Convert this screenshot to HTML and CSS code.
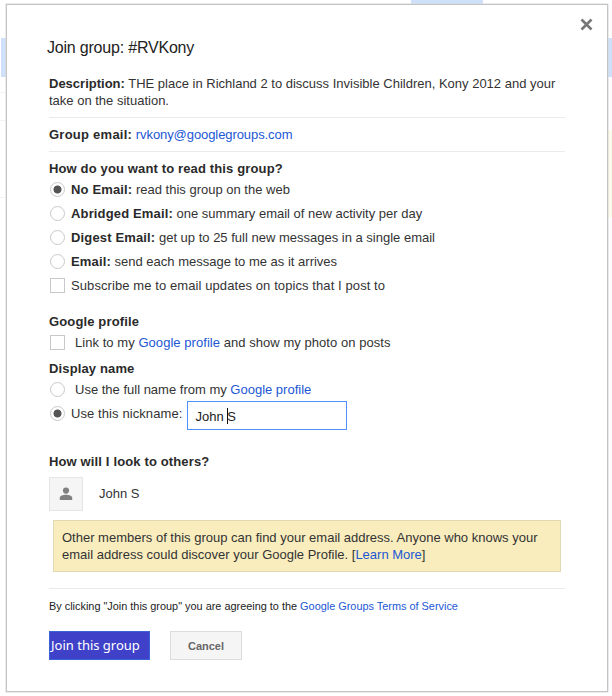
FILE: index.html
```html
<!DOCTYPE html>
<html lang="en">

<head>
    <meta charset="UTF-8">
    <meta name="viewport" content="width=device-width, initial-scale=1.0">
    <title>Join group</title>
    <link rel="stylesheet" href="styles.css">
</head>

<body>
    <div class="behind behind-left"></div>
    <div class="behind behind-right"></div>
    <div class="behind behind-top"></div>
    <div class="behind behind-yellow"></div>
    <div class="behind behind-line1"></div>
    <div class="behind behind-line2"></div>
    <div class="behind behind-line3"></div>

    <div class="dialog">
        <button class="close" aria-label="Close">
            <svg width="13" height="13" viewBox="0 0 13 13">
                <path d="M1.5 1.5L11.5 11.5M11.5 1.5L1.5 11.5" stroke="#777" stroke-width="2.6" fill="none"/>
            </svg>
        </button>
        <h1 class="title">Join group: #RVKony</h1>

        <p class="desc"><b>Description:</b> THE place in Richland 2 to discuss Invisible Children, Kony 2012 and your take on the situation.</p>
        <p class="email"><b>Group email:</b> <a href="#">rvkony@googlegroups.com</a></p>

        <h2 class="head head-read">How do you want to read this group?</h2>
        <div class="opts">
            <label class="opt"><input type="radio" name="read" checked><span><b>No Email:</b> read this group on the web</span></label>
            <label class="opt"><input type="radio" name="read"><span><b>Abridged Email:</b> one summary email of new activity per day</span></label>
            <label class="opt"><input type="radio" name="read"><span><b>Digest Email:</b> get up to 25 full new messages in a single email</span></label>
            <label class="opt"><input type="radio" name="read"><span><b>Email:</b> send each message to me as it arrives</span></label>
            <label class="opt opt-sub"><input type="checkbox"><span>Subscribe me to email updates on topics that I post to</span></label>
        </div>

        <h2 class="head head-profile">Google profile</h2>
        <label class="opt opt-wide opt-link"><input type="checkbox"><span>Link to my <a href="#">Google profile</a> and show my photo on posts</span></label>

        <h2 class="head head-name">Display name</h2>
        <label class="opt opt-wide"><input type="radio" name="dn"><span>Use the full name from my <a href="#">Google profile</a></span></label>
        <div class="nick-row">
            <label class="opt opt-sub"><input type="radio" name="dn" checked><span>Use this nickname:</span></label>
            <div class="nick">
                <input class="nick-input" type="text" value="John S">
                <span class="caret"></span>
            </div>
        </div>

        <h2 class="head head-look">How will I look to others?</h2>
        <div class="person">
            <div class="avatar">
                <svg width="14" height="14" viewBox="0 0 14 14">
                    <circle cx="7" cy="3.6" r="3.1" fill="#808080"/>
                    <path d="M0.8 13V10.6C0.8 8.8 4 7.7 7 7.7S13.2 8.8 13.2 10.6V13Z" fill="#808080"/>
                </svg>
            </div>
            <span class="person-name">John S</span>
        </div>

        <div class="notice">Other members of this group can find your email address. Anyone who knows your email address could discover your Google Profile. [<a href="#">Learn More</a>]</div>

        <p class="terms">By clicking "Join this group" you are agreeing to the <a href="#">Google Groups Terms of Service</a></p>

        <div class="actions">
            <button class="btn-join">Join this group</button>
            <button class="btn-cancel">Cancel</button>
        </div>
    </div>
</body>

</html>
```

FILE: styles.css
```css
* {
    margin: 0;
    padding: 0;
    box-sizing: border-box;
}

html, body {
    height: 696px;
    overflow: hidden;
}

body {
    background: #ffffff;
    font-family: 'Liberation Sans', Arial, sans-serif;
    font-size: 13px;
    line-height: 17px;
    color: #333333;
    padding: 4px 0 0 6px;
}

b {
    color: #2a2a2a;
    letter-spacing: 0.15px;
}

a {
    color: #2257d4;
    text-decoration: none;
}

/* page peeking out from under the dialog */
.behind {
    position: absolute;
}

.behind-left {
    left: 1px;
    top: 38px;
    width: 5px;
    height: 39px;
    background: #cfe0fa;
}

.behind-right {
    left: 608px;
    top: 38px;
    width: 4px;
    height: 39px;
    background: #cfe0fa;
}

.behind-top {
    left: 411px;
    top: 0;
    width: 72px;
    height: 4px;
    background: #cfe0fa;
}

.behind-yellow {
    left: 608px;
    top: 130px;
    width: 4px;
    height: 87px;
    background: #fdfaec;
}

.behind-line1,
.behind-line2,
.behind-line3 {
    left: 0;
    width: 6px;
    height: 1px;
    background: #f2f2f2;
}

.behind-line1 {
    top: 92px;
}

.behind-line2 {
    top: 120px;
}

.behind-line3 {
    top: 197px;
}

.dialog {
    position: relative;
    width: 602px;
    height: 688px;
    background: #ffffff;
    border: 1px solid #c4c4c4;
    box-shadow: 0 0 0 0.5px #d8d8d8;
    padding: 34px 42px 0 42px;
}

.close {
    position: absolute;
    left: 573px;
    top: 13px;
    width: 13px;
    height: 13px;
    border: none;
    background: none;
    display: flex;
}

.title {
    font-size: 16px;
    font-weight: normal;
    line-height: 18px;
    color: #222222;
    margin-left: -2px;
    letter-spacing: -0.2px;
}

.desc {
    margin-top: 18px;
    padding-bottom: 8px;
    border-bottom: 1px solid #ebebeb;
}

.desc b {
    letter-spacing: 0;
}

.email {
    padding: 8px 0;
    border-bottom: 1px solid #ebebeb;
}

.email b {
    letter-spacing: 0.25px;
}

.email a {
    letter-spacing: -0.08px;
}

.head {
    font-size: 13px;
    line-height: 17px;
    font-weight: bold;
    color: #2a2a2a;
    letter-spacing: 0.14px;
}

.head-read {
    margin-top: 8px;
}

.opts {
    display: flex;
    flex-direction: column;
    gap: 7px;
    margin-top: 4px;
}

.opt {
    display: flex;
    align-items: center;
    height: 17px;
    gap: 6px;
}

.opt input {
    appearance: none;
    width: 15px;
    height: 15px;
    margin-left: 1px;
    background: #ffffff;
    border: 1px solid #c9c9c9;
    flex: none;
}

.opt input[type="radio"] {
    border-radius: 50%;
}

.opt input[type="radio"]:checked {
    background: radial-gradient(circle, #555555 0, #555555 3.6px, #ffffff 4.4px);
}

.opt-wide {
    gap: 10px;
}

.opt-sub {
    letter-spacing: 0.09px;
}

.opt-link {
    letter-spacing: 0.05px;
}

.head-profile {
    margin-top: 19px;
}

.head-profile + .opt {
    margin-top: 4px;
}

.head-name {
    margin-top: 9px;
}

.head-name + .opt {
    margin-top: 4px;
}

.nick-row {
    display: flex;
    align-items: flex-start;
    gap: 5px;
    margin-top: 3px;
}

.nick-row .opt {
    margin-top: 4px;
}

.nick {
    position: relative;
    width: 160px;
    height: 29px;
}

.nick-input {
    width: 100%;
    height: 100%;
    border: 1px solid #4d90fe;
    padding: 1px 7px 0;
    font: 13px 'Liberation Sans', Arial, sans-serif;
    color: #222222;
    outline: none;
}

.caret {
    position: absolute;
    left: 40px;
    top: 7px;
    width: 1px;
    height: 16px;
    background: #111111;
}

.head-look {
    margin-top: 23px;
}

.person {
    display: flex;
    align-items: center;
    gap: 16px;
    margin-top: 7px;
}

.person-name {
    padding-bottom: 2px;
}

.avatar {
    width: 34px;
    height: 34px;
    background: #f5f5f5;
    border: 1px solid #e5e5e5;
    display: flex;
    align-items: center;
    justify-content: center;
}

.notice {
    margin: 9px 4px 0;
    width: 508px;
    height: 52px;
    padding: 8px 8px 0;
    background: #f9edbe;
    border: 1px solid #e0d9b4;
}

.terms {
    margin-top: 16px;
    padding-top: 9px;
    border-top: 1px solid #ebebeb;
    font-size: 10.9px;
    line-height: 17px;
    color: #222222;
}

.actions {
    display: flex;
    gap: 20px;
    margin-top: 16px;
}

.btn-join {
    width: 101px;
    height: 29px;
    padding: 0 0 2px 1px;
    text-align: left;
    background: #3f42c8;
    border: 1px solid #3b63d8;
    color: #ffffff;
    font: 13px 'Noto Sans', sans-serif;
}

.btn-cancel {
    width: 72px;
    height: 29px;
    background: #f5f5f5;
    border: 1px solid #dcdcdc;
    color: #666666;
    font: bold 11px 'Liberation Sans', Arial, sans-serif;
}
```
